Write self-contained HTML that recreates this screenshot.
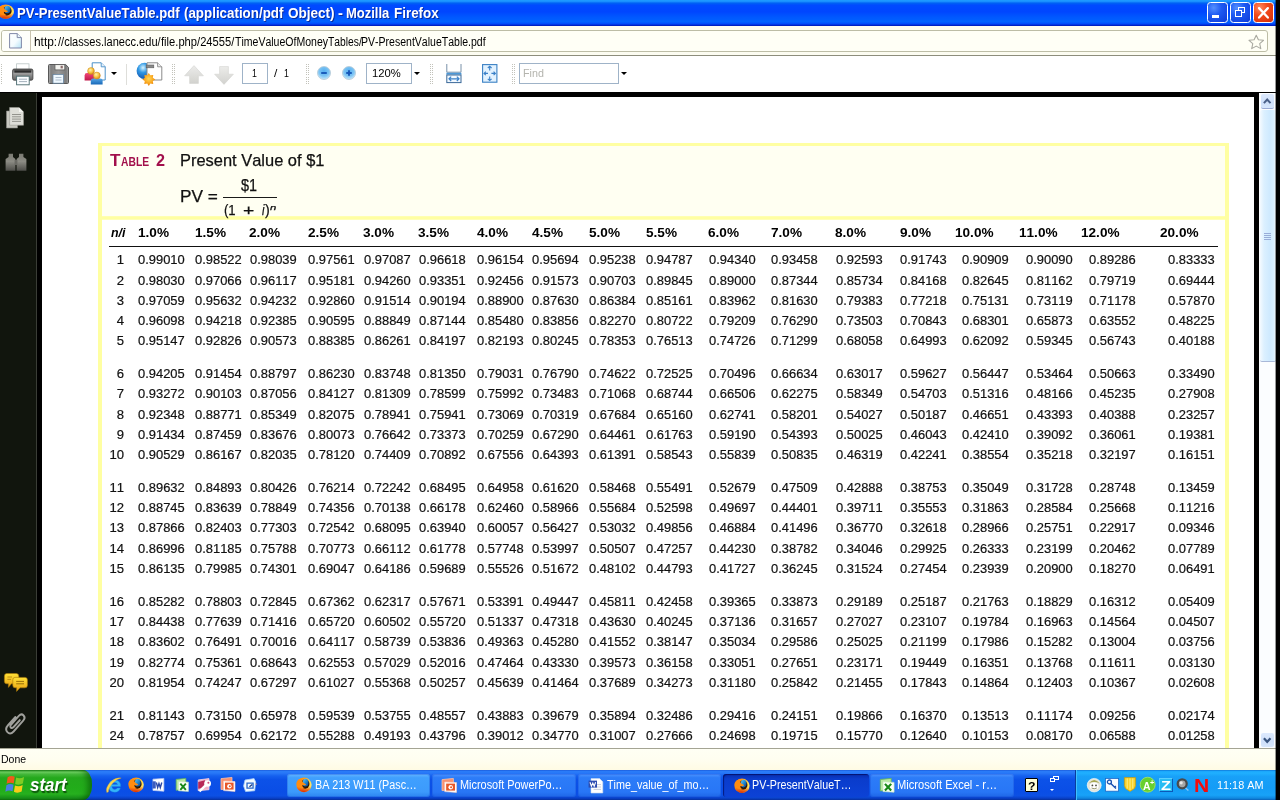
<!DOCTYPE html>
<html lang="en"><head><meta charset="utf-8"><title>PV-PresentValueTable.pdf (application/pdf Object) - Mozilla Firefox</title>
<style>
html,body{margin:0;padding:0}
body{width:1280px;height:800px;position:relative;overflow:hidden;background:#fff;font-family:"Liberation Sans",sans-serif;font-kerning:none;color:#000}
#screen{position:absolute;left:0;top:0;width:1280px;height:800px;overflow:hidden;will-change:transform}
.b{position:absolute;box-sizing:border-box}
.t{position:absolute;white-space:nowrap;transform-origin:0 0}
.d{color:#111;-webkit-text-stroke:0.2px #111}
.h{color:#111;-webkit-text-stroke:0.25px #111}
svg{position:absolute;overflow:visible}
.r{position:absolute;left:0;width:1280px;height:13px;font-size:12.7px;line-height:12.7px;color:#111;-webkit-text-stroke:0.2px #111}
.r>span{position:absolute;top:0;white-space:nowrap;transform-origin:0 0;transform:scaleX(1.0176)}
.r>.n{transform:scaleX(1.03);transform-origin:100% 0;right:1155.90px}
.hr{font-weight:bold;color:#000;-webkit-text-stroke:0}
.hr>span{transform:scaleX(1.0715)}
.hr>.n{font-style:italic;transform:scaleX(0.9788);transform-origin:0 0;right:auto;left:110.79px}
.c1{left:137.80px}.hr>.c1{left:138.04px}
.c2{left:194.60px}.hr>.c2{left:194.54px}
.c3{left:249.60px}.hr>.c3{left:249.24px}
.c4{left:308.40px}.hr>.c4{left:308.04px}
.c5{left:363.60px}.hr>.c5{left:363.24px}
.c6{left:418.60px}.hr>.c6{left:418.24px}
.c7{left:477.40px}.hr>.c7{left:477.24px}
.c8{left:532.40px}.hr>.c8{left:532.04px}
.c9{left:589.30px}.hr>.c9{left:588.94px}
.c10{left:646.10px}.hr>.c10{left:645.74px}
.c11{left:708.60px}.hr>.c11{left:708.24px}
.c12{left:771.40px}.hr>.c12{left:771.04px}
.c13{left:835.50px}.hr>.c13{left:835.14px}
.c14{left:899.90px}.hr>.c14{left:899.54px}
.c15{left:962.10px}.hr>.c15{left:954.54px}
.c16{left:1026.40px}.hr>.c16{left:1019.24px}
.c17{left:1088.90px}.hr>.c17{left:1081.44px}
.c18{left:1167.60px}.hr>.c18{left:1159.54px}


.tb{position:absolute;box-sizing:border-box;top:773.7px;height:23.1px;border-radius:3px;background:linear-gradient(180deg,#4c94ff 0%,#2c7cf8 16%,#2876f6 78%,#1e66e6 100%);box-shadow:inset 0 0 0 1px rgba(20,70,210,.3)}
.tb.hot{background:linear-gradient(180deg,#64b4ff 0%,#40a0fe 16%,#3c9afc 78%,#2c84f0 100%)}
.tb.act{background:linear-gradient(180deg,#082cac 0%,#0a3ccc 22%,#0c42d6 100%);box-shadow:inset 1px 1px 1px rgba(0,0,70,.6)}
.grip{position:absolute;width:1px;background:repeating-linear-gradient(180deg,#c2c2ba 0,#c2c2ba 1px,transparent 1px,transparent 2.1px)}
.inp{position:absolute;box-sizing:border-box;background:#fff;border:1px solid #9fb3c8}
.dd{position:absolute;width:0;height:0;border-left:3.2px solid transparent;border-right:3.2px solid transparent;border-top:3.4px solid #000}
</style></head>
<body>
<div id="screen">
<header id="titlebar">
<div class="b" style="left:0px;top:0px;width:1280px;height:26px;background:linear-gradient(180deg,#1e9cff 0%,#1c94ff 5%,#0062f4 12%,#004aff 20%,#0046ff 45%,#0058ff 66%,#0062ff 84%,#0048fa 92%,#0024cc 97%,#0018b4 100%);"></div>
<svg style="left:-3.2px;top:3.8px" width="17.4" height="15" viewBox="0 0 20 20" preserveAspectRatio="none"><defs><linearGradient id="g1" x1="0" y1="0" x2="1" y2="1"><stop offset="0" stop-color="#68c8f4"/><stop offset=".5" stop-color="#2088d0"/><stop offset="1" stop-color="#0c3c88"/></linearGradient>
    <linearGradient id="g2" x1="0" y1="0.3" x2="1" y2="0.45"><stop offset="0" stop-color="#ff8c0c"/><stop offset=".5" stop-color="#ff9c18"/><stop offset=".8" stop-color="#ffd040"/><stop offset="1" stop-color="#ffe870"/></linearGradient>
    <linearGradient id="g3" x1="0" y1="0" x2="0" y2="1"><stop offset="0" stop-color="#e83008" stop-opacity="0"/><stop offset=".6" stop-color="#e83008" stop-opacity="0"/><stop offset="1" stop-color="#d42404" stop-opacity=".95"/></linearGradient></defs>
    <circle cx="10" cy="10.2" r="9.5" fill="url(#g2)"/><circle cx="10" cy="10.2" r="9.5" fill="url(#g3)"/>
    <ellipse cx="11.4" cy="9.2" rx="5.4" ry="6" fill="#2c1606"/>
    <ellipse cx="12" cy="7.4" rx="3.6" ry="5" fill="url(#g1)"/>
    <path d="M0.6 8.6 C0.8 4.4 4.4 1.4 8.4 2.2 C7.4 3.8 7.6 5.6 8.8 7 C10 8.2 11.6 8.4 12.8 9.6 C11.4 11 9.4 11.2 8 10.4 C7.6 12.4 9 14 11 14.4 C7 15.6 1.6 13.6 0.6 8.6Z" fill="#ff8c10"/></svg>
<span class="t" style="left:16.88px;top:6px;font-size:14.5px;line-height:14.5px;transform:scaleX(0.9003);color:#fff;font-weight:bold;text-shadow:1px 1px 0 #0a2a9a;">PV-PresentValueTable.pdf </span><span class="t" style="left:184.34px;top:6px;font-size:14.5px;line-height:14.5px;transform:scaleX(0.9208);color:#fff;font-weight:bold;text-shadow:1px 1px 0 #0a2a9a;">(application/pdf </span><span class="t" style="left:287.54px;top:6px;font-size:14.5px;line-height:14.5px;transform:scaleX(0.9335);color:#fff;font-weight:bold;text-shadow:1px 1px 0 #0a2a9a;">Object) </span><span class="t" style="left:338.17px;top:6px;font-size:14.5px;line-height:14.5px;transform:scaleX(1.0186);color:#fff;font-weight:bold;text-shadow:1px 1px 0 #0a2a9a;">- </span><span class="t" style="left:346.03px;top:6px;font-size:14.5px;line-height:14.5px;transform:scaleX(0.8955);color:#fff;font-weight:bold;text-shadow:1px 1px 0 #0a2a9a;">Mozilla </span><span class="t" style="left:393.50px;top:6px;font-size:14.5px;line-height:14.5px;transform:scaleX(0.9245);color:#fff;font-weight:bold;text-shadow:1px 1px 0 #0a2a9a;">Firefox</span>
<div class="b" style="left:1207px;top:2px;width:20.5px;height:21px;background:radial-gradient(circle at 30% 25%,#5490ff 0%,#1e5af2 40%,#0c3ad8 100%);border:1px solid #fff;border-radius:3.5px;"></div><div class="b" style="left:1230px;top:2px;width:20.5px;height:21px;background:radial-gradient(circle at 30% 25%,#5490ff 0%,#1e5af2 40%,#0c3ad8 100%);border:1px solid #fff;border-radius:3.5px;"></div><div class="b" style="left:1253px;top:2px;width:20.5px;height:21px;background:radial-gradient(circle at 30% 25%,#ff8a60 0%,#f24a1c 40%,#d42c06 100%);border:1px solid #fff;border-radius:3.5px;"></div><div class="b" style="left:1211.7px;top:15px;width:7.3px;height:3.1px;background:#fff;"></div><div class="b" style="left:1238px;top:7.1px;width:7.1px;height:6.4px;border:1.1px solid #fff;border-top-width:1.7px;"></div><div class="b" style="left:1234.7px;top:10.3px;width:7.3px;height:6.6px;background:#1e56ec;border:1.1px solid #fff;border-top-width:1.7px;"></div><svg style="left:1253px;top:2.5px" width="20.5" height="20.5" viewBox="0 0 20 20" preserveAspectRatio="none"><path d="M5.9 5 L14.5 14.2 M14.5 5 L5.9 14.2" stroke="#fff" stroke-width="2.2" stroke-linecap="round"/></svg>
</header>
<div id="urlbar">
<div class="b" style="left:0px;top:26px;width:1280px;height:30px;background:#fcfcf1;border-bottom:1px solid #8d8d7c;"></div>
<div class="b" style="left:1px;top:30px;width:1267px;height:22px;background:#fffff6;border:1px solid #bdbda6;border-radius:3px;"></div>
<div class="b" style="left:2px;top:31px;width:28.5px;height:20px;background:#fefefb;border-right:1px solid #c9c3ad;border-radius:2px 0 0 2px;"></div>
<svg style="left:9px;top:33.2px" width="13" height="15.6" viewBox="0 0 13 15.6" preserveAspectRatio="none"><defs><linearGradient id="g4" x1="0" y1="0" x2="1" y2="1"><stop offset="0" stop-color="#fff"/><stop offset=".55" stop-color="#f4fcff"/><stop offset="1" stop-color="#b4e2f6"/></linearGradient></defs>
    <path d="M0.6 0.6 H8.2 L12.4 4.6 V15 H0.6Z" fill="url(#g4)" stroke="#8088a8" stroke-width="1"/><path d="M8.2 0.6 V4.6 H12.4" fill="#eaf5fb" stroke="#8088a8" stroke-width="1"/></svg>
<span class="t" style="left:33.92px;top:36px;font-size:12.0px;line-height:12.0px;transform:scaleX(0.9920);">http:</span><span class="t" style="left:58.00px;top:36px;font-size:12.0px;line-height:12.0px;transform:scaleX(0.9211);">//classes.lanecc.edu/</span><span class="t" style="left:161.09px;top:36px;font-size:12.0px;line-height:12.0px;transform:scaleX(0.9311);">file.php/24555/</span><span class="t" style="left:234.76px;top:36px;font-size:12.0px;line-height:12.0px;transform:scaleX(0.8771);">TimeValueOfMoney</span><span class="t" style="left:327.67px;top:36px;font-size:12.0px;line-height:12.0px;transform:scaleX(0.8597);">Tables/</span><span class="t" style="left:361.34px;top:36px;font-size:12.0px;line-height:12.0px;transform:scaleX(0.8773);">PV-PresentValueTable.pdf</span>
<svg style="left:1247.5px;top:33.5px" width="16.5" height="16" viewBox="0 0 20 20" preserveAspectRatio="none"><path d="M10 1.5 L12.6 7.2 L18.8 7.9 L14.2 12.1 L15.5 18.3 L10 15.1 L4.5 18.3 L5.8 12.1 L1.2 7.9 L7.4 7.2Z" fill="#fffff4" stroke="#a9a9a0" stroke-width="1.3" stroke-linejoin="round"/></svg>
</div>
<div id="toolbar">
<div class="b" style="left:0px;top:56px;width:1280px;height:36px;background:#fff;"></div>
<div class="grip" style="left:1px;top:64px;height:21px"></div><svg style="left:11.5px;top:62.5px" width="21.5" height="22.5" viewBox="0 0 21.5 22.5" preserveAspectRatio="none"><defs><linearGradient id="g5" x1="0" y1="0" x2="0" y2="1"><stop offset="0" stop-color="#5a5a5a"/><stop offset=".4" stop-color="#9c9c9c"/><stop offset="1" stop-color="#606060"/></linearGradient></defs>
    <rect x="4.6" y="0.8" width="12.4" height="7" fill="#fff" stroke="#b9c4c4" stroke-width=".8"/>
    <rect x="0.6" y="6" width="20.3" height="11.2" rx="1.6" fill="url(#g5)" stroke="#3c3c3c" stroke-width=".8"/>
    <rect x="2.4" y="7.4" width="16.7" height="2.2" fill="#2e2e2e"/>
    <rect x="4.6" y="13.2" width="12.6" height="8.6" fill="#fafdff" stroke="#4a6a6e" stroke-width=".9"/>
    <path d="M7 16.2 H15 M7 18.6 H15" stroke="#9aa8b4" stroke-width=".9"/></svg><svg style="left:48px;top:63.8px" width="21" height="20" viewBox="0 0 21 20" preserveAspectRatio="none"><defs><linearGradient id="g6" x1="0" y1="0" x2="1" y2="0"><stop offset="0" stop-color="#b4b4b4"/><stop offset=".12" stop-color="#808080"/><stop offset=".5" stop-color="#989898"/><stop offset=".88" stop-color="#7c7c7c"/><stop offset="1" stop-color="#a4a4a4"/></linearGradient></defs>
    <path d="M0.5 1.5 Q0.5 0.5 1.5 0.5 H17.6 L20.5 3.4 V18.5 Q20.5 19.5 19.5 19.5 H1.5 Q0.5 19.5 0.5 18.5Z" fill="url(#g6)" stroke="#585858" stroke-width="1"/>
    <rect x="7" y="0.7" width="9.8" height="5.2" fill="#f4f4f0" stroke="#555" stroke-width=".7"/><rect x="12.6" y="1.8" width="2.2" height="2.6" fill="#8a6a6a"/>
    <rect x="5" y="10.4" width="10.6" height="8.8" fill="#eef8ff" stroke="#5a7a9a" stroke-width=".7"/>
    <path d="M7.5 13.5 H13.5 M7.5 16 H13.5" stroke="#a8b8c8" stroke-width=".9"/></svg><svg style="left:83.5px;top:61.5px" width="22" height="23" viewBox="0 0 22 23" preserveAspectRatio="none"><defs><radialGradient id="g7" cx="40%" cy="35%" r="65%"><stop offset="0" stop-color="#fff3a8"/><stop offset=".6" stop-color="#f8c040"/><stop offset="1" stop-color="#d88a18"/></radialGradient>
    <linearGradient id="g8" x1="0" y1="0" x2="0" y2="1"><stop offset="0" stop-color="#f0487a"/><stop offset="1" stop-color="#c0184a"/></linearGradient>
    <linearGradient id="g9" x1="0" y1="0" x2="0" y2="1"><stop offset="0" stop-color="#58a8e8"/><stop offset="1" stop-color="#1868b8"/></linearGradient></defs>
    <path d="M8.2 0.8 H17.2 L21.2 4.8 V18 H8.2Z" fill="#fff" stroke="#4a90c8" stroke-width="1"/><path d="M17.2 0.8 V4.8 H21.2" fill="#e4f0fa" stroke="#4a90c8" stroke-width=".9"/>
    <path d="M0.6 18.4 V13.4 Q0.6 11 3 11 H8.4 Q10.4 11 10.4 13.4 V18.4Z" fill="url(#g8)"/>
    <circle cx="7" cy="9" r="3.4" fill="url(#g7)" stroke="#c88820" stroke-width=".5"/>
    <path d="M6.8 22.4 V18.6 Q6.8 16.4 9.2 16.4 H16.2 Q18.6 16.4 18.6 18.6 V22.4Z" fill="url(#g9)"/>
    <circle cx="12.8" cy="13.6" r="3.5" fill="url(#g7)" stroke="#c88820" stroke-width=".5"/></svg><div class="dd" style="left:110.5px;top:72px"></div><div class="b" style="left:126px;top:64px;width:1px;height:20.5px;background:#dededa;"></div><svg style="left:135.5px;top:61.5px" width="27" height="24" viewBox="0 0 27 24" preserveAspectRatio="none"><defs><radialGradient id="g10" cx="40%" cy="30%" r="75%"><stop offset="0" stop-color="#d8f4ff"/><stop offset=".4" stop-color="#3098e4"/><stop offset="1" stop-color="#104ca8"/></radialGradient>
    <radialGradient id="g11" cx="50%" cy="45%" r="55%"><stop offset="0" stop-color="#ffd858"/><stop offset=".7" stop-color="#f8a018"/><stop offset="1" stop-color="#e07808"/></radialGradient></defs>
    <ellipse cx="8.6" cy="9" rx="8" ry="8.2" fill="url(#g10)"/>
    <path d="M11 0.8 H21.6 L25.8 4.8 V18 H11Z" fill="#fff" stroke="#8a8a8a" stroke-width="1"/><path d="M21.6 0.8 V4.8 H25.8" fill="#eee" stroke="#8a8a8a" stroke-width=".9"/>
    <rect x="10.2" y="3" width="7.6" height="2.8" fill="#8a8a8a" stroke="#5a5a5a" stroke-width=".6"/>
    <path transform="translate(12.8 17.4) scale(1.12) translate(-12.8 -17.4)" d="M12.8 11.6 L14.2 13.8 L16.8 13.4 L16.4 16 L18.6 17.4 L16.4 18.8 L16.8 21.4 L14.2 21 L12.8 23.2 L11.4 21 L8.8 21.4 L9.2 18.8 L7 17.4 L9.2 16 L8.8 13.4 L11.4 13.8Z" fill="url(#g11)"/></svg><div class="grip" style="left:172px;top:64px;height:21px"></div><div class="grip" style="left:174.2px;top:64px;height:21px"></div><svg style="left:183.5px;top:64.5px" width="20" height="19" viewBox="0 0 20 19" preserveAspectRatio="none"><defs><linearGradient id="g12" x1="0" y1="0" x2="0" y2="1"><stop offset="0" stop-color="#ececea"/><stop offset="1" stop-color="#d2d2ce"/></linearGradient></defs>
    <path d="M10 0.6 L19.4 10.8 H14.4 V18.4 H5.6 V10.8 H0.6Z" fill="url(#g12)" stroke="#d4d4d0" stroke-width=".6"/></svg><svg style="left:213.5px;top:65.5px" width="20" height="19" viewBox="0 0 20 19" preserveAspectRatio="none"><path d="M10 18.4 L19.4 8.2 H14.4 V0.6 H5.6 V8.2 H0.6Z" fill="url(#g12)" stroke="#d4d4d0" stroke-width=".6"/></svg><div class="inp" style="left:242px;top:63px;width:26px;height:21px"></div><div class="grip" style="left:306px;top:64px;height:21px"></div><div class="grip" style="left:308.2px;top:64px;height:21px"></div><svg style="left:317px;top:65.7px" width="14" height="14" viewBox="0 0 14 14" preserveAspectRatio="none"><defs><radialGradient id="g13" cx="50%" cy="35%" r="70%"><stop offset="0" stop-color="#58b0f0"/><stop offset=".55" stop-color="#7cc4f4"/><stop offset="1" stop-color="#d8f0fc"/></radialGradient></defs>
        <circle cx="7" cy="7" r="6.5" fill="url(#g13)" stroke="#b4c8d4" stroke-width=".8"/><path d="M4.2 7 H9.8" stroke="#1858b8" stroke-width="1.9"/></svg><svg style="left:342px;top:65.7px" width="14" height="14" viewBox="0 0 14 14" preserveAspectRatio="none"><defs><radialGradient id="g14" cx="50%" cy="35%" r="70%"><stop offset="0" stop-color="#58b0f0"/><stop offset=".55" stop-color="#7cc4f4"/><stop offset="1" stop-color="#d8f0fc"/></radialGradient></defs>
        <circle cx="7" cy="7" r="6.5" fill="url(#g14)" stroke="#b4c8d4" stroke-width=".8"/><path d="M4.2 7 H9.8" stroke="#1858b8" stroke-width="1.9"/><path d="M7 4.2 V9.8" stroke="#1858b8" stroke-width="1.9"/></svg><div class="inp" style="left:366px;top:63px;width:46px;height:21px"></div><div class="dd" style="left:413.8px;top:72px"></div><div class="grip" style="left:430px;top:64px;height:21px"></div><div class="grip" style="left:432.2px;top:64px;height:21px"></div><svg style="left:445.5px;top:64px" width="16" height="19.5" viewBox="0 0 16 19.5" preserveAspectRatio="none"><path d="M0.8 0 V8.2 H15 V0" fill="#fff" stroke="#7890a8" stroke-width="1"/>
    <rect x="0.4" y="8.8" width="15" height="1.8" fill="#4a98d8"/>
    <rect x="0.8" y="11" width="14.2" height="7.6" fill="#f2f9ff" stroke="#3a6898" stroke-width="1"/>
    <path d="M3 14.8 H13 M5.2 12.6 L3 14.8 L5.2 17 M10.8 12.6 L13 14.8 L10.8 17" fill="none" stroke="#3a80c8" stroke-width="1.2"/></svg><svg style="left:481.5px;top:64px" width="15.5" height="19" viewBox="0 0 15.5 19" preserveAspectRatio="none"><rect x="0.6" y="0.6" width="14.3" height="17.6" fill="#e2f2ff" stroke="#3a80c4" stroke-width="1.1"/>
    <path d="M7.7 2.2 V6.4 M5.8 4 L7.7 2.2 L9.6 4 M7.7 16.6 V12.4 M5.8 14.8 L7.7 16.6 L9.6 14.8 M2 9.4 H6 M3.8 7.6 L2 9.4 L3.8 11.2 M13.4 9.4 H9.4 M11.6 7.6 L13.4 9.4 L11.6 11.2" fill="none" stroke="#3a80c8" stroke-width="1.1"/></svg><div class="grip" style="left:512px;top:64px;height:21px"></div><div class="grip" style="left:514.2px;top:64px;height:21px"></div><div class="inp" style="left:518.5px;top:63px;width:100.5px;height:21px"></div><div class="dd" style="left:620.6px;top:72px"></div>
<span class="t" style="left:252.13px;top:68px;font-size:11.5px;line-height:11.5px;transform:scaleX(0.7664);">1 </span><span class="t" style="left:273.90px;top:68px;font-size:11.5px;line-height:11.5px;transform:scaleX(1.0328);">/ </span><span class="t" style="left:283.93px;top:68px;font-size:11.5px;line-height:11.5px;transform:scaleX(0.7664);">1</span>
<span class="t" style="left:371.64px;top:68px;font-size:11.5px;line-height:11.5px;transform:scaleX(0.9777);">120%</span>
<span class="t" style="left:522.82px;top:68px;font-size:11.5px;line-height:11.5px;transform:scaleX(0.9330);color:#b4b4ae;">Find</span>
</div>
<aside id="sidebar">
<div class="b" style="left:0px;top:92px;width:1280px;height:656px;background:#000;"></div>
<div class="b" style="left:0px;top:93px;width:36.5px;height:655px;background:#11150d;border-right:1px solid #3a3d36;"></div>
<svg style="left:6px;top:107px" width="18" height="21.5" viewBox="0 0 18 21.5" preserveAspectRatio="none"><path d="M0.5 4 H11.5 V21 H0.5Z" fill="#c8c8c0" stroke="#8a8a84" stroke-width=".6"/>
    <path d="M3.6 0.5 H13 L17.5 5 V18.2 H3.6Z" fill="#deded8" stroke="#9a9a94" stroke-width=".6"/><path d="M13 0.5 V5 H17.5Z" fill="#f4f4f0"/>
    <path d="M6 7.5 H15 M6 9.8 H15 M6 12.1 H15 M6 14.4 H15" stroke="#8a8a84" stroke-width=".9"/></svg><svg style="left:4.5px;top:152.5px" width="22" height="18.5" viewBox="0 0 22 18.5" preserveAspectRatio="none"><defs><linearGradient id="g15" x1="0" y1="0" x2="0" y2="1"><stop offset="0" stop-color="#7a7a72"/><stop offset=".45" stop-color="#8c8c84"/><stop offset="1" stop-color="#4c4c48"/></linearGradient></defs>
    <path d="M3.6 0.8 H8 V4 L10.4 6 V17.8 H0.6 V6 L3.6 4Z" fill="url(#g15)"/><path d="M14 0.8 H18.4 V4 L21.4 6 V17.8 H11.6 V6 L14 4Z" fill="url(#g15)"/>
    <rect x="9.6" y="7" width="2.8" height="5" fill="#6a6a64"/></svg><svg style="left:3.5px;top:672.5px" width="24" height="19" viewBox="0 0 24 19" preserveAspectRatio="none"><defs><linearGradient id="g16" x1="0" y1="0" x2="0" y2="1"><stop offset="0" stop-color="#ffe038"/><stop offset="1" stop-color="#e8a010"/></linearGradient></defs>
    <path d="M2.6 0.5 H12.4 Q14.8 0.5 14.8 3 V8.4 Q14.8 10.8 12.4 10.8 H7.4 L4.4 14.4 V10.8 H2.6 Q0.4 10.8 0.4 8.4 V3 Q0.4 0.5 2.6 0.5Z" fill="url(#g16)" stroke="#a87808" stroke-width=".6"/>
    <path d="M11 4.4 H21 Q23.4 4.4 23.4 6.8 V12.4 Q23.4 14.8 21 14.8 H16 L12.6 18.4 V14.8 H11 Q8.8 14.8 8.8 12.4 V6.8 Q8.8 4.4 11 4.4Z" fill="url(#g16)" stroke="#a87808" stroke-width=".6"/>
    <path d="M12.2 8.4 H20 M12.2 10.8 H20" stroke="#9a7008" stroke-width="1"/><path d="M3.4 4 H8 M3.4 6.4 H7" stroke="#b88a10" stroke-width=".9"/></svg><svg style="left:4.5px;top:711px" width="21" height="24" viewBox="0 0 21 22.5" preserveAspectRatio="none"><path d="M14.8 8.6 L8.6 15 Q7 16.6 5.8 15.4 Q4.6 14.2 6.2 12.6 L13.8 4.6 Q16.4 2 18.6 4.2 Q20.8 6.4 18.2 9 L8.6 19.2 Q5.2 22.6 2.4 19.8 Q-0.4 17 3 13.4 L10.4 5.6" fill="none" stroke="#a0a09c" stroke-width="1.9" stroke-linecap="round"/></svg>
</aside>
<main id="page">
<div class="b" style="left:42px;top:97px;width:1212px;height:651px;background:#fff;"></div>
<div class="b" style="left:1259px;top:92.5px;width:17px;height:655.5px;background:#fbfdff;"></div><div class="b" style="left:1259.5px;top:110px;width:16px;height:251.5px;background:linear-gradient(90deg,#f4faff 0%,#dcf0ff 25%,#cfeaff 60%,#d8efff 85%,#f4faff 100%);border-radius:2px;border-bottom:1px solid #a8b8d8;"></div><div class="b" style="left:1264.2px;top:233px;width:6.6px;height:1px;background:#98acd8;"></div><div class="b" style="left:1264.2px;top:235.05px;width:6.6px;height:1px;background:#98acd8;"></div><div class="b" style="left:1264.2px;top:237.1px;width:6.6px;height:1px;background:#98acd8;"></div><div class="b" style="left:1264.2px;top:239.15px;width:6.6px;height:1px;background:#98acd8;"></div><div class="b" style="left:1261px;top:94px;width:13px;height:14.6px;background:linear-gradient(180deg,#dce9fd 0%,#cfe0fa 60%,#d6e6fc 100%);border-radius:2px;border-bottom:1px solid #9aaad4;"></div><svg style="left:1263.3px;top:98px" width="8.4" height="6.4" viewBox="0 0 8.4 6.4" preserveAspectRatio="none"><path d="M0.9 5.2 L4.2 1.6 L7.5 5.2" fill="none" stroke="#4a6088" stroke-width="2"/></svg><div class="b" style="left:1261px;top:732.6px;width:13px;height:14.6px;background:linear-gradient(180deg,#dce9fd 0%,#cfe0fa 60%,#d6e6fc 100%);border-radius:2px;"></div><svg style="left:1263.3px;top:737px" width="8.4" height="6.4" viewBox="0 0 8.4 6.4" preserveAspectRatio="none"><path d="M0.9 1.2 L4.2 4.8 L7.5 1.2" fill="none" stroke="#3a5680" stroke-width="2.2"/></svg>
<div class="b" style="left:98px;top:143px;width:1131px;height:610px;background:#fff;border:4px solid #ffffa2;border-top-width:3px;"></div>
<div class="b" style="left:102px;top:146px;width:1123px;height:70px;background:#fffff2;"></div>
<div class="b" style="left:102px;top:216px;width:1123px;height:4px;background:linear-gradient(180deg,#ffffc0 0,#ffffa2 1px,#ffffa2 3px,#ffffd0 4px);"></div>
<span class="t" style="left:110.11px;top:153px;font-size:15.8px;line-height:15.8px;transform:scaleX(1.0855);color:#a2104c;font-weight:bold;">T</span><span class="t" style="left:121.34px;top:156px;font-size:12.4px;line-height:12.4px;transform:scaleX(0.8313);color:#a2104c;font-weight:bold;">ABLE </span><span class="t" style="left:155.64px;top:153px;font-size:15.8px;line-height:15.8px;transform:scaleX(1.0254);color:#a2104c;font-weight:bold;">2</span>
<span class="t h" style="left:180.25px;top:152px;font-size:16.2px;line-height:16.2px;transform:scaleX(1.0159);">Present Value of $1</span>
<span class="t h" style="left:180.19px;top:188px;font-size:16.2px;line-height:16.2px;transform:scaleX(1.0645);">PV = </span><span class="t h" style="left:241.44px;top:177px;font-size:16.2px;line-height:16.2px;transform:scaleX(0.8913);">$1</span>
<div class="b" style="left:222.8px;top:196.6px;width:54px;height:1px;background:#1a1a1a;"></div>
<span class="t h" style="left:223.99px;top:202px;font-size:15.3px;line-height:15.3px;transform:scaleX(0.8565);">(1 </span><span class="t h" style="left:242.66px;top:202px;font-size:15.3px;line-height:15.3px;transform:scaleX(1.2646);">+ </span><span class="t h" style="left:261.62px;top:202px;font-size:15.3px;line-height:15.3px;transform:scaleX(0.7436);font-style:italic;">i</span><span class="t h" style="left:265.12px;top:202px;font-size:15.3px;line-height:15.3px;transform:scaleX(0.9367);">)</span><span class="t h" style="left:269.61px;top:204px;font-size:8.0px;line-height:8.0px;transform:scaleX(1.4166);font-style:italic;">n</span>
<div id="pvtable" role="table" aria-label="Table 2 Present Value of $1">
<div class="r hr" role="row" style="top:227px"><span class="n" role="columnheader">n/i</span><span class="c1" role="columnheader">1.0%</span><span class="c2" role="columnheader">1.5%</span><span class="c3" role="columnheader">2.0%</span><span class="c4" role="columnheader">2.5%</span><span class="c5" role="columnheader">3.0%</span><span class="c6" role="columnheader">3.5%</span><span class="c7" role="columnheader">4.0%</span><span class="c8" role="columnheader">4.5%</span><span class="c9" role="columnheader">5.0%</span><span class="c10" role="columnheader">5.5%</span><span class="c11" role="columnheader">6.0%</span><span class="c12" role="columnheader">7.0%</span><span class="c13" role="columnheader">8.0%</span><span class="c14" role="columnheader">9.0%</span><span class="c15" role="columnheader">10.0%</span><span class="c16" role="columnheader">11.0%</span><span class="c17" role="columnheader">12.0%</span><span class="c18" role="columnheader">20.0%</span></div>
<div class="b" style="left:109px;top:246px;width:1109px;height:1px;background:#111;"></div>
<div class="r" role="row" style="top:254px"><span class="n" role="rowheader">1</span><span class="c1" role="cell">0.99010</span><span class="c2" role="cell">0.98522</span><span class="c3" role="cell">0.98039</span><span class="c4" role="cell">0.97561</span><span class="c5" role="cell">0.97087</span><span class="c6" role="cell">0.96618</span><span class="c7" role="cell">0.96154</span><span class="c8" role="cell">0.95694</span><span class="c9" role="cell">0.95238</span><span class="c10" role="cell">0.94787</span><span class="c11" role="cell">0.94340</span><span class="c12" role="cell">0.93458</span><span class="c13" role="cell">0.92593</span><span class="c14" role="cell">0.91743</span><span class="c15" role="cell">0.90909</span><span class="c16" role="cell">0.90090</span><span class="c17" role="cell">0.89286</span><span class="c18" role="cell">0.83333</span></div>
<div class="r" role="row" style="top:275px"><span class="n" role="rowheader">2</span><span class="c1" role="cell">0.98030</span><span class="c2" role="cell">0.97066</span><span class="c3" role="cell">0.96117</span><span class="c4" role="cell">0.95181</span><span class="c5" role="cell">0.94260</span><span class="c6" role="cell">0.93351</span><span class="c7" role="cell">0.92456</span><span class="c8" role="cell">0.91573</span><span class="c9" role="cell">0.90703</span><span class="c10" role="cell">0.89845</span><span class="c11" role="cell">0.89000</span><span class="c12" role="cell">0.87344</span><span class="c13" role="cell">0.85734</span><span class="c14" role="cell">0.84168</span><span class="c15" role="cell">0.82645</span><span class="c16" role="cell">0.81162</span><span class="c17" role="cell">0.79719</span><span class="c18" role="cell">0.69444</span></div>
<div class="r" role="row" style="top:295px"><span class="n" role="rowheader">3</span><span class="c1" role="cell">0.97059</span><span class="c2" role="cell">0.95632</span><span class="c3" role="cell">0.94232</span><span class="c4" role="cell">0.92860</span><span class="c5" role="cell">0.91514</span><span class="c6" role="cell">0.90194</span><span class="c7" role="cell">0.88900</span><span class="c8" role="cell">0.87630</span><span class="c9" role="cell">0.86384</span><span class="c10" role="cell">0.85161</span><span class="c11" role="cell">0.83962</span><span class="c12" role="cell">0.81630</span><span class="c13" role="cell">0.79383</span><span class="c14" role="cell">0.77218</span><span class="c15" role="cell">0.75131</span><span class="c16" role="cell">0.73119</span><span class="c17" role="cell">0.71178</span><span class="c18" role="cell">0.57870</span></div>
<div class="r" role="row" style="top:315px"><span class="n" role="rowheader">4</span><span class="c1" role="cell">0.96098</span><span class="c2" role="cell">0.94218</span><span class="c3" role="cell">0.92385</span><span class="c4" role="cell">0.90595</span><span class="c5" role="cell">0.88849</span><span class="c6" role="cell">0.87144</span><span class="c7" role="cell">0.85480</span><span class="c8" role="cell">0.83856</span><span class="c9" role="cell">0.82270</span><span class="c10" role="cell">0.80722</span><span class="c11" role="cell">0.79209</span><span class="c12" role="cell">0.76290</span><span class="c13" role="cell">0.73503</span><span class="c14" role="cell">0.70843</span><span class="c15" role="cell">0.68301</span><span class="c16" role="cell">0.65873</span><span class="c17" role="cell">0.63552</span><span class="c18" role="cell">0.48225</span></div>
<div class="r" role="row" style="top:335px"><span class="n" role="rowheader">5</span><span class="c1" role="cell">0.95147</span><span class="c2" role="cell">0.92826</span><span class="c3" role="cell">0.90573</span><span class="c4" role="cell">0.88385</span><span class="c5" role="cell">0.86261</span><span class="c6" role="cell">0.84197</span><span class="c7" role="cell">0.82193</span><span class="c8" role="cell">0.80245</span><span class="c9" role="cell">0.78353</span><span class="c10" role="cell">0.76513</span><span class="c11" role="cell">0.74726</span><span class="c12" role="cell">0.71299</span><span class="c13" role="cell">0.68058</span><span class="c14" role="cell">0.64993</span><span class="c15" role="cell">0.62092</span><span class="c16" role="cell">0.59345</span><span class="c17" role="cell">0.56743</span><span class="c18" role="cell">0.40188</span></div>
<div class="r" role="row" style="top:368px"><span class="n" role="rowheader">6</span><span class="c1" role="cell">0.94205</span><span class="c2" role="cell">0.91454</span><span class="c3" role="cell">0.88797</span><span class="c4" role="cell">0.86230</span><span class="c5" role="cell">0.83748</span><span class="c6" role="cell">0.81350</span><span class="c7" role="cell">0.79031</span><span class="c8" role="cell">0.76790</span><span class="c9" role="cell">0.74622</span><span class="c10" role="cell">0.72525</span><span class="c11" role="cell">0.70496</span><span class="c12" role="cell">0.66634</span><span class="c13" role="cell">0.63017</span><span class="c14" role="cell">0.59627</span><span class="c15" role="cell">0.56447</span><span class="c16" role="cell">0.53464</span><span class="c17" role="cell">0.50663</span><span class="c18" role="cell">0.33490</span></div>
<div class="r" role="row" style="top:388px"><span class="n" role="rowheader">7</span><span class="c1" role="cell">0.93272</span><span class="c2" role="cell">0.90103</span><span class="c3" role="cell">0.87056</span><span class="c4" role="cell">0.84127</span><span class="c5" role="cell">0.81309</span><span class="c6" role="cell">0.78599</span><span class="c7" role="cell">0.75992</span><span class="c8" role="cell">0.73483</span><span class="c9" role="cell">0.71068</span><span class="c10" role="cell">0.68744</span><span class="c11" role="cell">0.66506</span><span class="c12" role="cell">0.62275</span><span class="c13" role="cell">0.58349</span><span class="c14" role="cell">0.54703</span><span class="c15" role="cell">0.51316</span><span class="c16" role="cell">0.48166</span><span class="c17" role="cell">0.45235</span><span class="c18" role="cell">0.27908</span></div>
<div class="r" role="row" style="top:409px"><span class="n" role="rowheader">8</span><span class="c1" role="cell">0.92348</span><span class="c2" role="cell">0.88771</span><span class="c3" role="cell">0.85349</span><span class="c4" role="cell">0.82075</span><span class="c5" role="cell">0.78941</span><span class="c6" role="cell">0.75941</span><span class="c7" role="cell">0.73069</span><span class="c8" role="cell">0.70319</span><span class="c9" role="cell">0.67684</span><span class="c10" role="cell">0.65160</span><span class="c11" role="cell">0.62741</span><span class="c12" role="cell">0.58201</span><span class="c13" role="cell">0.54027</span><span class="c14" role="cell">0.50187</span><span class="c15" role="cell">0.46651</span><span class="c16" role="cell">0.43393</span><span class="c17" role="cell">0.40388</span><span class="c18" role="cell">0.23257</span></div>
<div class="r" role="row" style="top:429px"><span class="n" role="rowheader">9</span><span class="c1" role="cell">0.91434</span><span class="c2" role="cell">0.87459</span><span class="c3" role="cell">0.83676</span><span class="c4" role="cell">0.80073</span><span class="c5" role="cell">0.76642</span><span class="c6" role="cell">0.73373</span><span class="c7" role="cell">0.70259</span><span class="c8" role="cell">0.67290</span><span class="c9" role="cell">0.64461</span><span class="c10" role="cell">0.61763</span><span class="c11" role="cell">0.59190</span><span class="c12" role="cell">0.54393</span><span class="c13" role="cell">0.50025</span><span class="c14" role="cell">0.46043</span><span class="c15" role="cell">0.42410</span><span class="c16" role="cell">0.39092</span><span class="c17" role="cell">0.36061</span><span class="c18" role="cell">0.19381</span></div>
<div class="r" role="row" style="top:449px"><span class="n" role="rowheader">10</span><span class="c1" role="cell">0.90529</span><span class="c2" role="cell">0.86167</span><span class="c3" role="cell">0.82035</span><span class="c4" role="cell">0.78120</span><span class="c5" role="cell">0.74409</span><span class="c6" role="cell">0.70892</span><span class="c7" role="cell">0.67556</span><span class="c8" role="cell">0.64393</span><span class="c9" role="cell">0.61391</span><span class="c10" role="cell">0.58543</span><span class="c11" role="cell">0.55839</span><span class="c12" role="cell">0.50835</span><span class="c13" role="cell">0.46319</span><span class="c14" role="cell">0.42241</span><span class="c15" role="cell">0.38554</span><span class="c16" role="cell">0.35218</span><span class="c17" role="cell">0.32197</span><span class="c18" role="cell">0.16151</span></div>
<div class="r" role="row" style="top:482px"><span class="n" role="rowheader">11</span><span class="c1" role="cell">0.89632</span><span class="c2" role="cell">0.84893</span><span class="c3" role="cell">0.80426</span><span class="c4" role="cell">0.76214</span><span class="c5" role="cell">0.72242</span><span class="c6" role="cell">0.68495</span><span class="c7" role="cell">0.64958</span><span class="c8" role="cell">0.61620</span><span class="c9" role="cell">0.58468</span><span class="c10" role="cell">0.55491</span><span class="c11" role="cell">0.52679</span><span class="c12" role="cell">0.47509</span><span class="c13" role="cell">0.42888</span><span class="c14" role="cell">0.38753</span><span class="c15" role="cell">0.35049</span><span class="c16" role="cell">0.31728</span><span class="c17" role="cell">0.28748</span><span class="c18" role="cell">0.13459</span></div>
<div class="r" role="row" style="top:502px"><span class="n" role="rowheader">12</span><span class="c1" role="cell">0.88745</span><span class="c2" role="cell">0.83639</span><span class="c3" role="cell">0.78849</span><span class="c4" role="cell">0.74356</span><span class="c5" role="cell">0.70138</span><span class="c6" role="cell">0.66178</span><span class="c7" role="cell">0.62460</span><span class="c8" role="cell">0.58966</span><span class="c9" role="cell">0.55684</span><span class="c10" role="cell">0.52598</span><span class="c11" role="cell">0.49697</span><span class="c12" role="cell">0.44401</span><span class="c13" role="cell">0.39711</span><span class="c14" role="cell">0.35553</span><span class="c15" role="cell">0.31863</span><span class="c16" role="cell">0.28584</span><span class="c17" role="cell">0.25668</span><span class="c18" role="cell">0.11216</span></div>
<div class="r" role="row" style="top:522px"><span class="n" role="rowheader">13</span><span class="c1" role="cell">0.87866</span><span class="c2" role="cell">0.82403</span><span class="c3" role="cell">0.77303</span><span class="c4" role="cell">0.72542</span><span class="c5" role="cell">0.68095</span><span class="c6" role="cell">0.63940</span><span class="c7" role="cell">0.60057</span><span class="c8" role="cell">0.56427</span><span class="c9" role="cell">0.53032</span><span class="c10" role="cell">0.49856</span><span class="c11" role="cell">0.46884</span><span class="c12" role="cell">0.41496</span><span class="c13" role="cell">0.36770</span><span class="c14" role="cell">0.32618</span><span class="c15" role="cell">0.28966</span><span class="c16" role="cell">0.25751</span><span class="c17" role="cell">0.22917</span><span class="c18" role="cell">0.09346</span></div>
<div class="r" role="row" style="top:543px"><span class="n" role="rowheader">14</span><span class="c1" role="cell">0.86996</span><span class="c2" role="cell">0.81185</span><span class="c3" role="cell">0.75788</span><span class="c4" role="cell">0.70773</span><span class="c5" role="cell">0.66112</span><span class="c6" role="cell">0.61778</span><span class="c7" role="cell">0.57748</span><span class="c8" role="cell">0.53997</span><span class="c9" role="cell">0.50507</span><span class="c10" role="cell">0.47257</span><span class="c11" role="cell">0.44230</span><span class="c12" role="cell">0.38782</span><span class="c13" role="cell">0.34046</span><span class="c14" role="cell">0.29925</span><span class="c15" role="cell">0.26333</span><span class="c16" role="cell">0.23199</span><span class="c17" role="cell">0.20462</span><span class="c18" role="cell">0.07789</span></div>
<div class="r" role="row" style="top:563px"><span class="n" role="rowheader">15</span><span class="c1" role="cell">0.86135</span><span class="c2" role="cell">0.79985</span><span class="c3" role="cell">0.74301</span><span class="c4" role="cell">0.69047</span><span class="c5" role="cell">0.64186</span><span class="c6" role="cell">0.59689</span><span class="c7" role="cell">0.55526</span><span class="c8" role="cell">0.51672</span><span class="c9" role="cell">0.48102</span><span class="c10" role="cell">0.44793</span><span class="c11" role="cell">0.41727</span><span class="c12" role="cell">0.36245</span><span class="c13" role="cell">0.31524</span><span class="c14" role="cell">0.27454</span><span class="c15" role="cell">0.23939</span><span class="c16" role="cell">0.20900</span><span class="c17" role="cell">0.18270</span><span class="c18" role="cell">0.06491</span></div>
<div class="r" role="row" style="top:596px"><span class="n" role="rowheader">16</span><span class="c1" role="cell">0.85282</span><span class="c2" role="cell">0.78803</span><span class="c3" role="cell">0.72845</span><span class="c4" role="cell">0.67362</span><span class="c5" role="cell">0.62317</span><span class="c6" role="cell">0.57671</span><span class="c7" role="cell">0.53391</span><span class="c8" role="cell">0.49447</span><span class="c9" role="cell">0.45811</span><span class="c10" role="cell">0.42458</span><span class="c11" role="cell">0.39365</span><span class="c12" role="cell">0.33873</span><span class="c13" role="cell">0.29189</span><span class="c14" role="cell">0.25187</span><span class="c15" role="cell">0.21763</span><span class="c16" role="cell">0.18829</span><span class="c17" role="cell">0.16312</span><span class="c18" role="cell">0.05409</span></div>
<div class="r" role="row" style="top:616px"><span class="n" role="rowheader">17</span><span class="c1" role="cell">0.84438</span><span class="c2" role="cell">0.77639</span><span class="c3" role="cell">0.71416</span><span class="c4" role="cell">0.65720</span><span class="c5" role="cell">0.60502</span><span class="c6" role="cell">0.55720</span><span class="c7" role="cell">0.51337</span><span class="c8" role="cell">0.47318</span><span class="c9" role="cell">0.43630</span><span class="c10" role="cell">0.40245</span><span class="c11" role="cell">0.37136</span><span class="c12" role="cell">0.31657</span><span class="c13" role="cell">0.27027</span><span class="c14" role="cell">0.23107</span><span class="c15" role="cell">0.19784</span><span class="c16" role="cell">0.16963</span><span class="c17" role="cell">0.14564</span><span class="c18" role="cell">0.04507</span></div>
<div class="r" role="row" style="top:636px"><span class="n" role="rowheader">18</span><span class="c1" role="cell">0.83602</span><span class="c2" role="cell">0.76491</span><span class="c3" role="cell">0.70016</span><span class="c4" role="cell">0.64117</span><span class="c5" role="cell">0.58739</span><span class="c6" role="cell">0.53836</span><span class="c7" role="cell">0.49363</span><span class="c8" role="cell">0.45280</span><span class="c9" role="cell">0.41552</span><span class="c10" role="cell">0.38147</span><span class="c11" role="cell">0.35034</span><span class="c12" role="cell">0.29586</span><span class="c13" role="cell">0.25025</span><span class="c14" role="cell">0.21199</span><span class="c15" role="cell">0.17986</span><span class="c16" role="cell">0.15282</span><span class="c17" role="cell">0.13004</span><span class="c18" role="cell">0.03756</span></div>
<div class="r" role="row" style="top:657px"><span class="n" role="rowheader">19</span><span class="c1" role="cell">0.82774</span><span class="c2" role="cell">0.75361</span><span class="c3" role="cell">0.68643</span><span class="c4" role="cell">0.62553</span><span class="c5" role="cell">0.57029</span><span class="c6" role="cell">0.52016</span><span class="c7" role="cell">0.47464</span><span class="c8" role="cell">0.43330</span><span class="c9" role="cell">0.39573</span><span class="c10" role="cell">0.36158</span><span class="c11" role="cell">0.33051</span><span class="c12" role="cell">0.27651</span><span class="c13" role="cell">0.23171</span><span class="c14" role="cell">0.19449</span><span class="c15" role="cell">0.16351</span><span class="c16" role="cell">0.13768</span><span class="c17" role="cell">0.11611</span><span class="c18" role="cell">0.03130</span></div>
<div class="r" role="row" style="top:677px"><span class="n" role="rowheader">20</span><span class="c1" role="cell">0.81954</span><span class="c2" role="cell">0.74247</span><span class="c3" role="cell">0.67297</span><span class="c4" role="cell">0.61027</span><span class="c5" role="cell">0.55368</span><span class="c6" role="cell">0.50257</span><span class="c7" role="cell">0.45639</span><span class="c8" role="cell">0.41464</span><span class="c9" role="cell">0.37689</span><span class="c10" role="cell">0.34273</span><span class="c11" role="cell">0.31180</span><span class="c12" role="cell">0.25842</span><span class="c13" role="cell">0.21455</span><span class="c14" role="cell">0.17843</span><span class="c15" role="cell">0.14864</span><span class="c16" role="cell">0.12403</span><span class="c17" role="cell">0.10367</span><span class="c18" role="cell">0.02608</span></div>
<div class="r" role="row" style="top:710px"><span class="n" role="rowheader">21</span><span class="c1" role="cell">0.81143</span><span class="c2" role="cell">0.73150</span><span class="c3" role="cell">0.65978</span><span class="c4" role="cell">0.59539</span><span class="c5" role="cell">0.53755</span><span class="c6" role="cell">0.48557</span><span class="c7" role="cell">0.43883</span><span class="c8" role="cell">0.39679</span><span class="c9" role="cell">0.35894</span><span class="c10" role="cell">0.32486</span><span class="c11" role="cell">0.29416</span><span class="c12" role="cell">0.24151</span><span class="c13" role="cell">0.19866</span><span class="c14" role="cell">0.16370</span><span class="c15" role="cell">0.13513</span><span class="c16" role="cell">0.11174</span><span class="c17" role="cell">0.09256</span><span class="c18" role="cell">0.02174</span></div>
<div class="r" role="row" style="top:730px"><span class="n" role="rowheader">24</span><span class="c1" role="cell">0.78757</span><span class="c2" role="cell">0.69954</span><span class="c3" role="cell">0.62172</span><span class="c4" role="cell">0.55288</span><span class="c5" role="cell">0.49193</span><span class="c6" role="cell">0.43796</span><span class="c7" role="cell">0.39012</span><span class="c8" role="cell">0.34770</span><span class="c9" role="cell">0.31007</span><span class="c10" role="cell">0.27666</span><span class="c11" role="cell">0.24698</span><span class="c12" role="cell">0.19715</span><span class="c13" role="cell">0.15770</span><span class="c14" role="cell">0.12640</span><span class="c15" role="cell">0.10153</span><span class="c16" role="cell">0.08170</span><span class="c17" role="cell">0.06588</span><span class="c18" role="cell">0.01258</span></div>
</div>
</main>
<div id="statusbar">
<div class="b" style="left:0px;top:748px;width:1280px;height:22px;background:linear-gradient(180deg,#fffff4 0%,#fffef0 50%,#fffbe4 100%);border-top:1px solid #a4a494;"></div>
<span class="t" style="left:1.34px;top:754px;font-size:11.3px;line-height:11.3px;transform:scaleX(0.9302);">Done</span>
</div>
<footer id="taskbar">
<div class="b" style="left:0px;top:770px;width:1280px;height:30px;background:linear-gradient(180deg,#1a58d8 0%,#2a7cf8 4%,#2878f8 10%,#1560ee 20%,#0c52e8 32%,#0a4ee6 70%,#0c50e4 86%,#0940c8 94%,#06309c 100%);"></div><div class="b" style="left:0px;top:770px;width:92px;height:30px;background:linear-gradient(180deg,#1a7c14 0%,#6cd060 7%,#44b83a 14%,#24a81c 26%,#22ac1a 60%,#26b01e 80%,#18901a 94%,#0e6e0c 100%);border-radius:0 9px 9px 0/0 14px 14px 0;box-shadow:inset -7px 0 6px -3px rgba(0,70,0,.55);"></div><svg style="left:6.4px;top:775.2px" width="18.8" height="18.4" viewBox="0 0 18.5 18" preserveAspectRatio="none"><path d="M1.6 2.2 Q5 0 8.6 1.8 L7.6 8.2 Q4.2 6.6 0.6 8.6Z" fill="#f05a1c"/><path d="M10 2.4 Q13.6 4.2 17.8 2 L16.6 8.4 Q12.6 10.4 9 8.8Z" fill="#80cc24"/>
    <path d="M0.4 10 Q4 8 7.4 9.6 L6.4 16 Q3 14.4 -0.6 16.4Z" fill="#4a80e4"/><path d="M8.8 10.2 Q12.4 12 16.4 9.8 L15.4 16.2 Q11.4 18.2 7.8 16.4Z" fill="#f8cc18"/></svg><span class="t" style="left:30.41px;top:777px;font-size:17.8px;line-height:17.8px;transform:scaleX(0.9541);color:#fff;font-weight:bold;font-style:italic;text-shadow:1px 1.5px 1px rgba(0,50,0,.7);">start</span><svg style="left:105.5px;top:776.8px" width="15.6" height="16" viewBox="0 0 16 16" preserveAspectRatio="none"><path d="M15 9.6 H6 Q6.4 12.4 9 12.4 Q10.8 12.4 11.6 11 H14.8 Q13.4 15.2 9 15.2 Q2.8 15.2 2.8 9 Q2.8 3 9 3 Q15.2 3 15 9.6Z M6.1 7.6 H11.9 Q11.5 5.6 9 5.6 Q6.6 5.6 6.1 7.6Z" fill="#34b4f8" fill-rule="evenodd" stroke="#1888e0" stroke-width=".4"/>
        <path d="M0.8 15.6 Q-1 11 4.6 5 Q10 0 15.6 1 Q11 1.8 7 6 Q2.6 10.6 2.4 15Z" fill="#f8d450" stroke="#d8a020" stroke-width=".3"/></svg><svg style="left:128px;top:777px" width="16.2" height="15.4" viewBox="0 0 20 20" preserveAspectRatio="none"><defs><linearGradient id="g17" x1="0" y1="0" x2="1" y2="1"><stop offset="0" stop-color="#68c8f4"/><stop offset=".5" stop-color="#2088d0"/><stop offset="1" stop-color="#0c3c88"/></linearGradient>
    <linearGradient id="g18" x1="0" y1="0.3" x2="1" y2="0.45"><stop offset="0" stop-color="#ff8c0c"/><stop offset=".5" stop-color="#ff9c18"/><stop offset=".8" stop-color="#ffd040"/><stop offset="1" stop-color="#ffe870"/></linearGradient>
    <linearGradient id="g19" x1="0" y1="0" x2="0" y2="1"><stop offset="0" stop-color="#e83008" stop-opacity="0"/><stop offset=".6" stop-color="#e83008" stop-opacity="0"/><stop offset="1" stop-color="#d42404" stop-opacity=".95"/></linearGradient></defs>
    <circle cx="10" cy="10.2" r="9.5" fill="url(#g18)"/><circle cx="10" cy="10.2" r="9.5" fill="url(#g19)"/>
    <ellipse cx="11.4" cy="9.2" rx="5.4" ry="6" fill="#2c1606"/>
    <ellipse cx="12" cy="7.4" rx="3.6" ry="5" fill="url(#g17)"/>
    <path d="M0.6 8.6 C0.8 4.4 4.4 1.4 8.4 2.2 C7.4 3.8 7.6 5.6 8.8 7 C10 8.2 11.6 8.4 12.8 9.6 C11.4 11 9.4 11.2 8 10.4 C7.6 12.4 9 14 11 14.4 C7 15.6 1.6 13.6 0.6 8.6Z" fill="#ff8c10"/></svg><svg style="left:152px;top:778px" width="13.2" height="13.6" viewBox="0 0 14 14" preserveAspectRatio="none"><path d="M1 1.2 L12.6 0.4 V13.6 L1 12.8Z" fill="#fff" stroke="#b8c8f0" stroke-width=".8"/><path d="M0.4 3.4 H4 V10.8 H0.4Z" fill="#3a5cc0"/>
        <path d="M4.6 4.6 L6 9.8 L7.4 5.6 L8.8 9.8 L10.4 4.6" fill="none" stroke="#2a48a8" stroke-width="1.5"/></svg><svg style="left:174.6px;top:777.8px" width="13.8" height="13.8" viewBox="0 0 14 14" preserveAspectRatio="none"><path d="M1.2 1.4 L11 0.4 V11.4 L1.2 12.4Z" fill="#b8e8a0" stroke="#68b858" stroke-width=".8"/><path d="M3.6 3.6 L13.6 4.2 V13.6 L3.6 13Z" fill="#f8fff4" stroke="#c8e8c0" stroke-width=".6"/>
        <path d="M5.4 5.6 L11 12 M11 5.6 L5.4 12" stroke="#188818" stroke-width="1.9"/></svg><svg style="left:197.3px;top:777.6px" width="15" height="14.6" viewBox="0 0 15 15" preserveAspectRatio="none"><path d="M1.2 2 L12 0.6 V12 L1.2 13Z" fill="#f0b0c8" stroke="#f8d8e4" stroke-width=".8"/><path d="M1.2 4 L8 2.4 V10 L1.2 11Z" fill="#b82858"/>
        <circle cx="10.6" cy="5.6" r="3.4" fill="#fff"/><circle cx="11.4" cy="4.8" r="1" fill="#d04878"/><path d="M8.6 7.6 L2.4 13.8" stroke="#fff" stroke-width="2.4"/></svg><svg style="left:220.1px;top:777.2px" width="15.5" height="15" viewBox="0 0 15.5 15" preserveAspectRatio="none"><path d="M1 1.6 L12 0.4 V11.4 L1 12.6Z" fill="#f89070" stroke="#f8c0a8" stroke-width=".8"/><path d="M3.6 4 L15 4.6 V14.4 L3.6 13.6Z" fill="#fff" stroke="#f8d0c0" stroke-width=".6"/>
        <rect x="5" y="5.6" width="8.6" height="7" fill="#e85828"/><circle cx="9.4" cy="9.2" r="2.2" fill="#fff"/><circle cx="9.8" cy="9.2" r="1" fill="#e85828"/></svg><svg style="left:243.3px;top:777.6px" width="14.6" height="14.2" viewBox="0 0 14.5 14" preserveAspectRatio="none"><path d="M2 2 L11 0.6 L12.6 4 L11.6 12.6 L2.6 13.4 L0.6 8Z" fill="#f4fbff" stroke="#a8d0f8" stroke-width=".8"/>
        <path d="M4 5 H10 V10 H4Z" fill="none" stroke="#2868c8" stroke-width="1.3"/><path d="M6.4 8.6 L9.2 6.4" stroke="#183880" stroke-width="1.2"/><path d="M12.4 5.4 L14.2 6 L12.6 7" fill="#e88868"/></svg><div class="tb hot" style="left:286.5px;width:143.3px"></div><svg style="left:296px;top:776.6px" width="16" height="15.4" viewBox="0 0 20 20" preserveAspectRatio="none"><defs><linearGradient id="g20" x1="0" y1="0" x2="1" y2="1"><stop offset="0" stop-color="#68c8f4"/><stop offset=".5" stop-color="#2088d0"/><stop offset="1" stop-color="#0c3c88"/></linearGradient>
    <linearGradient id="g21" x1="0" y1="0.3" x2="1" y2="0.45"><stop offset="0" stop-color="#ff8c0c"/><stop offset=".5" stop-color="#ff9c18"/><stop offset=".8" stop-color="#ffd040"/><stop offset="1" stop-color="#ffe870"/></linearGradient>
    <linearGradient id="g22" x1="0" y1="0" x2="0" y2="1"><stop offset="0" stop-color="#e83008" stop-opacity="0"/><stop offset=".6" stop-color="#e83008" stop-opacity="0"/><stop offset="1" stop-color="#d42404" stop-opacity=".95"/></linearGradient></defs>
    <circle cx="10" cy="10.2" r="9.5" fill="url(#g21)"/><circle cx="10" cy="10.2" r="9.5" fill="url(#g22)"/>
    <ellipse cx="11.4" cy="9.2" rx="5.4" ry="6" fill="#2c1606"/>
    <ellipse cx="12" cy="7.4" rx="3.6" ry="5" fill="url(#g20)"/>
    <path d="M0.6 8.6 C0.8 4.4 4.4 1.4 8.4 2.2 C7.4 3.8 7.6 5.6 8.8 7 C10 8.2 11.6 8.4 12.8 9.6 C11.4 11 9.4 11.2 8 10.4 C7.6 12.4 9 14 11 14.4 C7 15.6 1.6 13.6 0.6 8.6Z" fill="#ff8c10"/></svg><span class="t" style="left:314.62px;top:779px;font-size:12.0px;line-height:12.0px;transform:scaleX(0.8983);color:#fff;">BA 213 W11 (Pasc…</span><div class="tb" style="left:432px;width:143.8px"></div><svg style="left:441px;top:777.6px" width="16" height="15" viewBox="0 0 15.5 15" preserveAspectRatio="none"><path d="M1 1.6 L12 0.4 V11.4 L1 12.6Z" fill="#f89070" stroke="#f8c0a8" stroke-width=".8"/><path d="M3.6 4 L15 4.6 V14.4 L3.6 13.6Z" fill="#fff" stroke="#f8d0c0" stroke-width=".6"/>
        <rect x="5" y="5.6" width="8.6" height="7" fill="#e85828"/><circle cx="9.4" cy="9.2" r="2.2" fill="#fff"/><circle cx="9.8" cy="9.2" r="1" fill="#e85828"/></svg><span class="t" style="left:459.61px;top:779px;font-size:12.0px;line-height:12.0px;transform:scaleX(0.9084);color:#fff;">Microsoft PowerPo…</span><div class="tb" style="left:577.5px;width:143.8px"></div><svg style="left:587.5px;top:777.6px" width="15.5" height="15.5" viewBox="0 0 15.5 15.5" preserveAspectRatio="none"><path d="M3 0.6 H11.6 L14.8 3.8 V15 H3Z" fill="#fff" stroke="#c8d8f0" stroke-width=".6"/><path d="M5.6 6.6 H13 M5.6 9 H13 M5.6 11.4 H13" stroke="#b8c0d0" stroke-width=".8"/><rect x="0.6" y="2.6" width="8.4" height="7" fill="#2c4cb0"/><path d="M2 4.2 L3.4 8.2 L4.8 5 L6.2 8.2 L7.6 4.2" fill="none" stroke="#fff" stroke-width="1.1"/></svg><span class="t" style="left:606.76px;top:779px;font-size:12.0px;line-height:12.0px;transform:scaleX(0.8961);color:#fff;">Time_value_of_mo…</span><div class="tb act" style="left:723px;width:146px"></div><svg style="left:734px;top:777.6px" width="16" height="15.2" viewBox="0 0 20 20" preserveAspectRatio="none"><defs><linearGradient id="g23" x1="0" y1="0" x2="1" y2="1"><stop offset="0" stop-color="#68c8f4"/><stop offset=".5" stop-color="#2088d0"/><stop offset="1" stop-color="#0c3c88"/></linearGradient>
    <linearGradient id="g24" x1="0" y1="0.3" x2="1" y2="0.45"><stop offset="0" stop-color="#ff8c0c"/><stop offset=".5" stop-color="#ff9c18"/><stop offset=".8" stop-color="#ffd040"/><stop offset="1" stop-color="#ffe870"/></linearGradient>
    <linearGradient id="g25" x1="0" y1="0" x2="0" y2="1"><stop offset="0" stop-color="#e83008" stop-opacity="0"/><stop offset=".6" stop-color="#e83008" stop-opacity="0"/><stop offset="1" stop-color="#d42404" stop-opacity=".95"/></linearGradient></defs>
    <circle cx="10" cy="10.2" r="9.5" fill="url(#g24)"/><circle cx="10" cy="10.2" r="9.5" fill="url(#g25)"/>
    <ellipse cx="11.4" cy="9.2" rx="5.4" ry="6" fill="#2c1606"/>
    <ellipse cx="12" cy="7.4" rx="3.6" ry="5" fill="url(#g23)"/>
    <path d="M0.6 8.6 C0.8 4.4 4.4 1.4 8.4 2.2 C7.4 3.8 7.6 5.6 8.8 7 C10 8.2 11.6 8.4 12.8 9.6 C11.4 11 9.4 11.2 8 10.4 C7.6 12.4 9 14 11 14.4 C7 15.6 1.6 13.6 0.6 8.6Z" fill="#ff8c10"/></svg><span class="t" style="left:752.12px;top:779px;font-size:12.0px;line-height:12.0px;transform:scaleX(0.8918);color:#fff;">PV-PresentValueT…</span><div class="tb" style="left:870px;width:143.8px"></div><svg style="left:879px;top:777.8px" width="15.5" height="14.6" viewBox="0 0 14 14" preserveAspectRatio="none"><path d="M1.2 1.4 L11 0.4 V11.4 L1.2 12.4Z" fill="#b8e8a0" stroke="#68b858" stroke-width=".8"/><path d="M3.6 3.6 L13.6 4.2 V13.6 L3.6 13Z" fill="#f8fff4" stroke="#c8e8c0" stroke-width=".6"/>
        <path d="M5.4 5.6 L11 12 M11 5.6 L5.4 12" stroke="#188818" stroke-width="1.9"/></svg><span class="t" style="left:897.49px;top:779px;font-size:12.0px;line-height:12.0px;transform:scaleX(0.9260);color:#fff;">Microsoft Excel - r…</span><div class="b" style="left:1024.8px;top:778px;width:13.2px;height:13.8px;background:#ffffd8;border:1.3px solid #000;border-radius:1px;"></div><span class="t" style="left:1027.84px;top:781px;font-size:11.5px;line-height:11.5px;transform:scaleX(1.0627);font-weight:bold;">?</span><div class="b" style="left:1053px;top:776px;width:5.6px;height:4px;border:1px solid #fff;border-top-width:1.6px;"></div><div class="b" style="left:1049.6px;top:778.4px;width:5.8px;height:4px;background:#0c50e6;border:1px solid #fff;border-top-width:1.6px;"></div><div class="dd" style="left:1050.2px;top:789.2px;border-top-color:#fff;border-left-width:2.6px;border-right-width:2.6px;border-top-width:2.6px"></div><div class="b" style="left:1074.8px;top:770px;width:201.2px;height:30px;background:linear-gradient(180deg,#1078d8 0%,#1ca8fc 5%,#20b0ff 10%,#18a0f8 22%,#149cf6 60%,#18a2f8 84%,#1088e0 94%,#0a60b8 100%);border-left:1px solid #0a3c9c;box-shadow:inset 1px 0 0 #40c0ff;"></div><svg style="left:1086.5px;top:777.5px" width="14.5" height="14.5" viewBox="0 0 14.5 14.5" preserveAspectRatio="none"><ellipse cx="7.2" cy="7.2" rx="7" ry="6.8" fill="#e4e4d8" stroke="#fff" stroke-width=".6"/><path d="M1.6 5.4 Q7.2 -1.6 12.8 5.4 Q7.2 2.6 1.6 5.4Z" fill="#a8a850"/><ellipse cx="7.2" cy="8.2" rx="4.4" ry="3.6" fill="#fff"/><circle cx="5.4" cy="7.4" r=".9" fill="#4a4a3a"/><circle cx="9" cy="7.4" r=".9" fill="#4a4a3a"/><path d="M4.6 10 Q7.2 11.6 9.8 10" stroke="#8a8a5a" stroke-width=".9" fill="none"/></svg><svg style="left:1105px;top:778px" width="14" height="13.6" viewBox="0 0 14 13.6" preserveAspectRatio="none"><rect x=".4" y=".4" width="13.2" height="12.8" fill="#f8fcff" stroke="#1868c8" stroke-width=".8"/><circle cx="4.4" cy="4" r="2" fill="none" stroke="#1850b0" stroke-width="1.3"/><path d="M5.8 5.4 L11 10.6 M9.6 9.2 L10.8 8" stroke="#1850b0" stroke-width="1.4"/></svg><svg style="left:1124px;top:777.4px" width="12" height="14.8" viewBox="0 0 12 14.8" preserveAspectRatio="none"><path d="M0.4 0.6 H11.6 V8.6 Q11.6 12 6 14.4 Q0.4 12 0.4 8.6Z" fill="#f8d028" stroke="#c89808" stroke-width=".7"/><path d="M3.2 1.4 V11.6 M6 1.4 V13 M8.8 1.4 V11.6" stroke="#fff08a" stroke-width="1"/></svg><svg style="left:1140px;top:777.2px" width="15.4" height="15.4" viewBox="0 0 15.4 15.4" preserveAspectRatio="none"><circle cx="7.7" cy="7.7" r="7.5" fill="#68d030"/><circle cx="7.7" cy="7.7" r="7.5" fill="none" stroke="#a8e868" stroke-width=".8"/></svg><span class="t" style="left:1142.74px;top:781px;font-size:11.5px;line-height:11.5px;transform:scaleX(0.9073);color:#fff;font-weight:bold;">A</span><span class="t" style="left:1150.10px;top:779px;font-size:8.0px;line-height:8.0px;transform:scaleX(0.8974);color:#fff;font-weight:bold;">+</span><div class="b" style="left:1158.6px;top:777.6px;width:14.8px;height:14.8px;background:#28bcf4;border:1px solid #0c58b8;border-top-color:#58d0ff;border-left-color:#58d0ff;"></div><span class="t" style="left:1161.11px;top:780px;font-size:12.5px;line-height:12.5px;transform:scaleX(1.3038);color:#fff;font-weight:bold;">Z</span><svg style="left:1176px;top:778px" width="13" height="13" viewBox="0 0 13 13" preserveAspectRatio="none"><circle cx="6.2" cy="5.8" r="5.6" fill="#4a4a4a"/><circle cx="6.2" cy="5.8" r="3.4" fill="#a8a8a8"/><circle cx="5.2" cy="4.8" r="1.6" fill="#e8e8e8"/><path d="M9.6 10 L12.4 12.6" stroke="#8ac8f8" stroke-width="1.4"/></svg><span class="t" style="left:1194.39px;top:776px;font-size:19.0px;line-height:19.0px;transform:scaleX(1.1101);color:#f40c0c;font-weight:bold;">N</span><span class="t" style="left:1216.67px;top:780px;font-size:11.0px;line-height:11.0px;transform:scaleX(0.9880);color:#fff;">11:18 AM</span>
</footer>
<div class="b" style="left:1275px;top:0px;width:5px;height:800px;background:linear-gradient(90deg,rgba(0,0,0,.4) 0,rgba(0,0,0,.4) 1px,#000 1px);"></div>
</div>
</body></html>
